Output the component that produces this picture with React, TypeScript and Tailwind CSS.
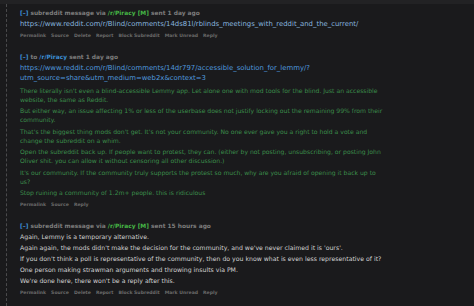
const font = { fontFamily: '"DejaVu Sans", Verdana, sans-serif' };

type Head = { kind: "via" | "to"; time: string };

function Header({ kind, time }: Head) {
  return (
    <div className="text-[5.9px] leading-[8px] font-bold text-[#7d7d7d] whitespace-nowrap">
      <span className="text-[#3d8fd6]">[–]</span>{" "}
      {kind === "via" ? (
        <>
          subreddit message via <span className="text-[#46b846]">/r/Piracy</span>{" "}
          <span className="text-[#46b846]">[M]</span> sent {time}
        </>
      ) : (
        <>
          to <span className="text-[#3d8fd6]">/r/Piracy</span> sent {time}
        </>
      )}
    </div>
  );
}

function Buttons({ items }: { items: string[] }) {
  return (
    <div className="flex gap-[5px] text-[4.6px] leading-[8px] font-bold text-[#6a6a6a] whitespace-nowrap">
      {items.map((b) => (
        <span key={b}>{b}</span>
      ))}
    </div>
  );
}

const full = ["Permalink", "Source", "Delete", "Report", "Block Subreddit", "Mark Unread", "Reply"];

const green = [
  "There literally isn't even a blind-accessible Lemmy app. Let alone one with mod tools for the blind. Just an accessible website, the same as Reddit.",
  "But either way, an issue affecting 1% or less of the userbase does not justify locking out the remaining 99% from their community.",
  "That's the biggest thing mods don't get. It's not your community. No one ever gave you a right to hold a vote and change the subreddit on a whim.",
  "Open the subreddit back up. If people want to protest, they can. (either by not posting, unsubscribing, or posting John Oliver shit. you can allow it without censoring all other discussion.)",
  "It's our community. If the community truly supports the protest so much, why are you afraid of opening it back up to us?",
  "Stop ruining a community of 1.2m+ people. this is ridiculous",
];

const reply = [
  "Again, Lemmy is a temporary alternative.",
  "Again again, the mods didn't make the decision for the community, and we've never claimed it is 'ours'.",
  "If you don't think a poll is representative of the community, then do you know what is even less representative of it?",
  "One person making strawman arguments and throwing insults via PM.",
  "We're done here, there won't be a reply after this.",
];

export default function App() {
  return (
    <div className="w-[474px] h-[306px] overflow-hidden bg-[#1a1a1c]" style={font}>
      <div className="h-[4px] bg-[#222224]" />
      <div className="flex h-[302px] pl-[6px]">
        <div className="border-l border-dashed border-[#4a4a4c]" />
        <div className="pl-[13px] pt-[5px] flex flex-col">
          <Header kind="via" time="1 day ago" />
          <div className="mt-[3px] text-[6.9px] leading-[9px] text-[#86b4df] whitespace-nowrap">
            https://www.reddit.com/r/Blind/comments/14ds81l/rblinds_meetings_with_reddit_and_the_current/
          </div>
          <div className="mt-[3px]">
            <Buttons items={full} />
          </div>

          <div className="mt-[13px]">
            <Header kind="to" time="1 day ago" />
          </div>
          <div className="mt-[2px] w-[400px] text-[6.9px] leading-[10px] text-[#4f98dc] break-all">
            https://www.reddit.com/r/Blind/comments/14dr797/accessible_solution_for_lemmy/?
            <br />
            utm_source=share&amp;utm_medium=web2x&amp;context=3
          </div>
          <div className="w-[367px] text-[6.1px] leading-[9px] text-[#3a8d4b]">
            {green.map((p, i) => (
              <p key={i} className="mt-[2.5px]">
                {p}
              </p>
            ))}
          </div>
          <div className="mt-[4px]">
            <Buttons items={["Permalink", "Source", "Reply"]} />
          </div>

          <div className="mt-[13px]">
            <Header kind="via" time="15 hours ago" />
          </div>
          <div className="w-[440px] text-[6.2px] leading-[9px] text-[#d2d2d2]">
            {reply.map((p, i) => (
              <p key={i} className="mt-[2px]">
                {p}
              </p>
            ))}
          </div>
          <div className="mt-[4px]">
            <Buttons items={full} />
          </div>
        </div>
      </div>
    </div>
  );
}
